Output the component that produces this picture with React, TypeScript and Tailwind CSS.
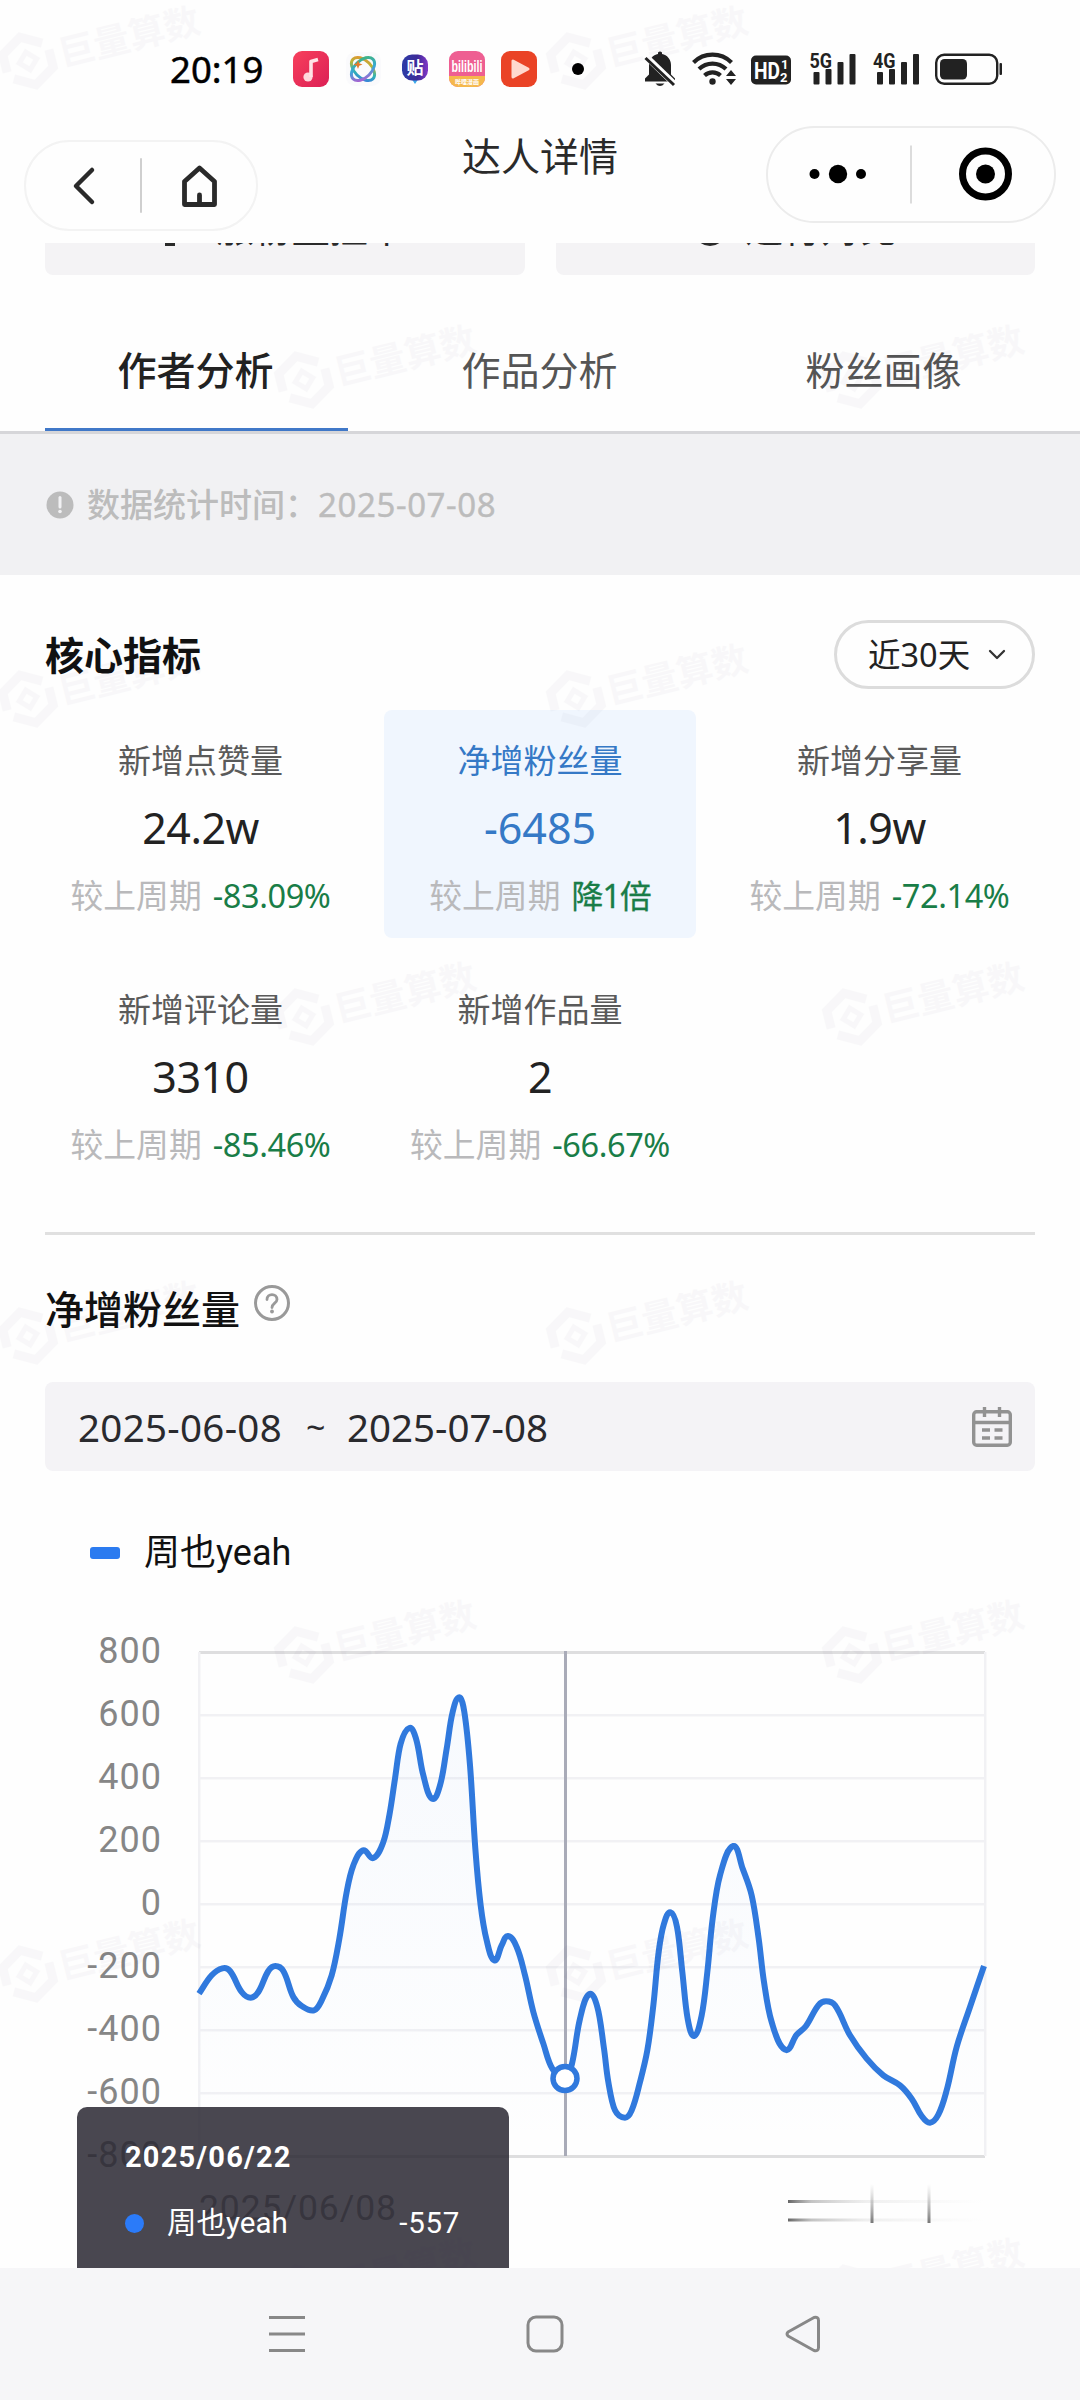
import React from "react";

const metrics = [
    { label: "新增点赞量", value: "24.2w", change: "-83.09%" },
    { label: "净增粉丝量", value: "-6485", change: "降1倍", active: true },
    { label: "新增分享量", value: "1.9w", change: "-72.14%" },
    { label: "新增评论量", value: "3310", change: "-85.46%" },
    { label: "新增作品量", value: "2", change: "-66.67%" },
];

const tabs = ["作者分析", "作品分析", "粉丝画像"];

// Curve samples, in thirds of a pixel from the top left corner of the plot
const curve: [number, number][] = [
    [0, 1025], [38, 970], [70, 949], [93, 957], [128, 1020], [155, 1037], [178, 1020], [208, 957], [229, 942],
    [253, 957], [283, 1035], [308, 1062], [345, 1075], [368, 1045], [398, 970], [421, 860], [443, 720], [463, 640],
    [492, 595], [523, 618], [553, 570], [571, 490], [588, 380], [605, 275], [631, 228], [651, 260], [673, 370],
    [699, 440], [723, 400], [743, 290], [761, 180], [781, 136], [796, 180], [813, 340], [829, 590], [845, 760],
    [863, 865], [886, 925], [908, 880], [927, 852], [953, 885], [978, 970], [1003, 1080], [1033, 1175],
    [1060, 1250], [1099, 1280], [1119, 1235], [1143, 1100], [1170, 1027], [1195, 1065], [1215, 1190],
    [1228, 1290], [1248, 1375], [1278, 1397], [1298, 1375], [1323, 1290], [1345, 1195], [1363, 1060],
    [1379, 900], [1395, 815], [1415, 781], [1434, 825], [1450, 960], [1466, 1100], [1485, 1152], [1508, 1090],
    [1525, 960], [1541, 800], [1563, 670], [1603, 582], [1631, 650], [1658, 730], [1679, 860], [1695, 990],
    [1718, 1110], [1758, 1193], [1793, 1148], [1821, 1122], [1858, 1060], [1881, 1048], [1908, 1060],
    [1953, 1150], [2003, 1220], [2053, 1270], [2103, 1300], [2138, 1340], [2168, 1392], [2193, 1412],
    [2218, 1388], [2243, 1315], [2273, 1185], [2313, 1065], [2355, 942],
];

// Smooth path: tangents follow the neighbours, handles never reach past half of a segment
const smoothPath = (points: [number, number][]) => {
    const p = points.map(([x, y]) => [x / 3, y / 3]);
    const tangents = p.map((_, i) => {
        const a = p[Math.max(i - 1, 0)];
        const b = p[Math.min(i + 1, p.length - 1)];
        const len = Math.hypot(b[0] - a[0], b[1] - a[1]);
        return [(b[0] - a[0]) / len, (b[1] - a[1]) / len];
    });
    let d = `M${p[0][0]} ${p[0][1]}`;
    for (let i = 0; i < p.length - 1; i++) {
        const [x1, y1] = p[i];
        const [x2, y2] = p[i + 1];
        const [t1, t2] = [tangents[i], tangents[i + 1]];
        const h = Math.hypot(x2 - x1, y2 - y1) / 2.8;
        const h1 = Math.min(h, ((x2 - x1) * 0.5) / t1[0]);
        const h2 = Math.min(h, ((x2 - x1) * 0.5) / t2[0]);
        d += `C${x1 + t1[0] * h1} ${y1 + t1[1] * h1} ${x2 - t2[0] * h2} ${y2 - t2[1] * h2} ${x2} ${y2}`;
    }
    return d;
};

const linePath = smoothPath(curve);

function AppIcons() {
    return (
        <svg width="300" height="42" viewBox="0 0 300 42" className="absolute top-0 left-[291px]">
            <defs>
                <linearGradient id="petal" x1="0" y1="0" x2="1" y2="1">
                    <stop offset="0" stopColor="#f08a2c" />
                    <stop offset="0.35" stopColor="#b7b53a" />
                    <stop offset="0.65" stopColor="#2fb3b5" />
                    <stop offset="1" stopColor="#3d6fe8" />
                </linearGradient>
                <linearGradient id="petal2" x1="1" y1="0" x2="0" y2="1">
                    <stop offset="0" stopColor="#3fb56c" />
                    <stop offset="0.5" stopColor="#38a9d8" />
                    <stop offset="1" stopColor="#c64fd0" />
                </linearGradient>
                <linearGradient id="music" x1="0" y1="0" x2="1" y2="1">
                    <stop offset="0" stopColor="#f7405c" />
                    <stop offset="1" stopColor="#dc1f55" />
                </linearGradient>
                <linearGradient id="tieba" x1="0" y1="0" x2="1" y2="0">
                    <stop offset="0" stopColor="#2c3ca6" />
                    <stop offset="0.6" stopColor="#3d2a98" />
                    <stop offset="1" stopColor="#8338c8" />
                </linearGradient>
            </defs>
            {/* Music */}
            <rect x="2" y="3" width="36" height="36" rx="9" fill="url(#music)" />
            <circle cx="17" cy="29" r="4.6" fill="#ffd7dc" />
            <path d="M20 29V13.500l7-2" fill="none" stroke="#ffe3e6" strokeWidth="3.600" strokeLinejoin="round" />
            {/* Petal */}
            <rect x="55" y="4" width="35" height="34" rx="9" fill="#fafafc" />
            <g fill="none" strokeWidth="3">
                <ellipse cx="72" cy="21" rx="14" ry="8.500" transform="rotate(45 72 21)" stroke="url(#petal)" />
                <ellipse cx="72" cy="21" rx="14" ry="8.500" transform="rotate(-45 72 21)" stroke="url(#petal2)" />
            </g>
            <path d="M67 12l1.200 3.300 3.300 1.200-3.300 1.200L67 21l-1.200-3.300-3.300-1.200 3.300-1.200z" fill="#e57a2a" />
            {/* Tieba */}
            <path d="M120 30h8l-4 6z" fill="#3aa8ea" />
            <rect x="111" y="6.500" width="26" height="26" rx="10" fill="url(#tieba)" />
            <text x="124" y="25.500" textAnchor="middle" fontSize="17" fontWeight="700" fill="#fff" className="font-['Noto_Sans_CJK_SC',sans-serif]">贴</text>
            {/* Bilibili comics */}
            <rect x="158" y="3" width="36" height="36" rx="9" fill="#ee5f92" />
            <path d="M158 28h36v2a9 9 0 0 1-9 9h-18a9 9 0 0 1-9-9z" fill="#f5b84c" />
            <text x="176" y="24" textAnchor="middle" fontSize="17" fontWeight="700" fill="#fff" textLength="31" lengthAdjust="spacingAndGlyphs" className="font-['Liberation_Sans',sans-serif]">bilibili</text>
            <text x="176" y="36" textAnchor="middle" fontSize="6" fontWeight="700" fill="#fff" className="font-['Noto_Sans_CJK_SC',sans-serif]">哔哩漫画</text>
            {/* Player */}
            <rect x="210" y="3" width="36" height="36" rx="9" fill="#ea4326" />
            <path d="M222 13v16l15-8z" fill="#ffd9cf" stroke="#ffd9cf" strokeWidth="3" strokeLinejoin="round" />
            <circle cx="287" cy="21" r="6" fill="#000" />
        </svg>
    );
}

function SystemIcons() {
    return (
        <svg width="360" height="42" viewBox="643 50 360 42" fill="#222" className="absolute top-0 left-[643px]">
            {/* Muted bell */}
            <path d="M645 83.500v-3l4-4V67c0-6 4-10 9-11v-1.500q2-2 4 0V56c5 1 9 5 9 11v9.500l4 4v3z" />
            <path d="M655.500 85.500h9q-4.500 5-9 0z" />
            <path d="M646 58.500l29 28" stroke="#fff" strokeWidth="6" />
            <path d="M645.500 60l28.500 27" stroke="#222" strokeWidth="3" />
            {/* Wifi */}
            <g fill="none" stroke="#222" strokeWidth="4.200">
                <path d="M693.500 64.500a27 27 0 0 1 38 0" />
                <path d="M699 71a19.500 19.500 0 0 1 27 0" />
                <path d="M704.500 77.500a12 12 0 0 1 16 0" />
            </g>
            <circle cx="712.500" cy="83.500" r="3.200" />
            <path d="M726 78l5-6 5 6zM726 81l5 6 5-6z" />
            {/* HD */}
            <rect x="751" y="57.500" width="40" height="29" rx="5" />
            <g fill="#fff" fontWeight="700" className="font-['Roboto',sans-serif]">
                <text x="754" y="80.500" fontSize="23" textLength="26" lengthAdjust="spacingAndGlyphs">HD</text>
                <text x="781" y="71" fontSize="13">1</text>
                <text x="780" y="83.500" fontSize="13">2</text>
            </g>
            {/* Mobile signals */}
            {[{ x: 0, name: "5G" }, { x: 63.500, name: "4G" }].map((sim) => (
                <g key={sim.name} transform={`translate(${sim.x} 0)`}>
                    <rect x="813.500" y="74" width="6" height="12.500" rx="1" />
                    <rect x="825.500" y="71" width="6" height="15.500" rx="1" />
                    <rect x="837.500" y="64" width="6" height="22.500" rx="1" />
                    <rect x="849.500" y="56" width="6" height="30.500" rx="1" />
                    <text x="809.500" y="69.500" fontSize="20.500" fontWeight="700" textLength="22.500" lengthAdjust="spacingAndGlyphs" className="font-['Roboto',sans-serif]">{sim.name}</text>
                </g>
            ))}
            {/* Battery */}
            <rect x="936.200" y="56.700" width="61" height="29" rx="8" fill="none" stroke="#222" strokeWidth="2.400" />
            <rect x="940" y="61" width="27" height="20.500" rx="4.500" />
            <rect x="999.500" y="65" width="2.500" height="12" rx="1" />
        </svg>
    );
}

function Header() {
    return (
        <header className="flex h-[243px] flex-none flex-col">
            <div className="relative mt-[48px] flex h-[42px] items-center pl-[170px]">
                <span className="text-[36.500px] leading-[42px] text-black [-webkit-text-stroke:0.500px_black]">20:19</span>
                <AppIcons />
                <SystemIcons />
            </div>
            <div className="grid flex-1 grid-cols-[1fr_auto_1fr] items-start">
                <div className="mt-[50px] ml-[24px] flex h-[91px] w-[234px] items-center rounded-full border-2 border-[#f3f3f3]">
                    <svg width="230" height="87" viewBox="0 0 230 87" fill="none" stroke="#2a2a2a" strokeLinecap="round" strokeLinejoin="round">
                        <path d="M66 28L50 44l16 16" strokeWidth="4.500" />
                        <path d="M115 17v53" stroke="#cfcfcf" strokeWidth="2" />
                        <path d="M158.500 62.500v-23L173.500 26l15 13.500v23z" strokeWidth="4.800" />
                        <path d="M173.500 53v8" strokeWidth="4.800" />
                    </svg>
                </div>
                <h1 className="mt-[45px] text-[39px] leading-[42px] text-[#2a2a2a]">达人详情</h1>
                <div className="mt-[36px] mr-[24px] flex h-[97px] w-[290px] items-center justify-self-end rounded-full border-2 border-[#ececec]">
                    <svg width="286" height="93" viewBox="0 0 286 93" fill="#000">
                        <circle cx="46.500" cy="46" r="5" />
                        <circle cx="70" cy="46" r="9.200" />
                        <circle cx="93" cy="46" r="5" />
                        <path d="M143 17.500v58" stroke="#dcdcdc" strokeWidth="2" />
                        <circle cx="217.500" cy="46" r="23" fill="none" stroke="#000" strokeWidth="7" />
                        <circle cx="217.500" cy="46" r="9.500" />
                    </svg>
                </div>
            </div>
        </header>
    );
}

function ActionButtons() {
    return (
        <div className="-mt-[64px] grid flex-none grid-cols-2 gap-[31px] px-[45px] text-[38px] leading-[96px] text-[#2a2a2a]">
            <div className="flex h-[96px] justify-center gap-[34px] rounded-[8px] bg-[#f4f3f5] pr-[6px]">
                <svg width="24" height="38" viewBox="0 0 24 38" fill="#2a2a2a" className="mt-[30px]">
                    <path d="M1 24L4 14q8-12 16 0l3 10zM7 32h10v5H7z" />
                </svg>
                <span>涨粉监控中</span>
            </div>
            <div className="flex h-[96px] justify-center gap-[18px] rounded-[8px] bg-[#f4f3f5]">
                <svg width="34" height="34" viewBox="0 0 34 34" fill="none" stroke="#2a2a2a" strokeWidth="4" className="mt-[34px]">
                    <circle cx="17" cy="17" r="14" />
                    <path d="M17 3v28" />
                </svg>
                <span>进行对比</span>
            </div>
        </div>
    );
}

function Tabs() {
    return (
        <nav className="mt-[35px] flex h-[124px] flex-none gap-[41px] border-b-3 border-[#d6d6d9] pl-[45px] text-[39px]">
            {tabs.map((tab, i) => (
                <div
                    key={tab}
                    className={
                        i === 0
                            ? "w-[303px] border-b-3 border-[#4078c8] pt-[39px] pr-[2px] text-center leading-[42px] font-medium text-[#222]"
                            : "w-[303px] pt-[39px] pr-[2px] text-center leading-[42px] text-[#555]"
                    }
                >
                    {tab}
                </div>
            ))}
        </nav>
    );
}

function MetricCard({ label, value, change, active }: { label: string; value: string; change: string; active?: boolean }) {
    return (
        <div className={active ? "h-[228px] rounded-[8px] bg-[#f0f6fe] pt-[31px] text-center" : "h-[228px] pt-[31px] text-center"}>
            <div className={active ? "text-[33px] leading-[40px] text-[#3579c6]" : "text-[33px] leading-[40px] text-[#5a5a5a]"}>{label}</div>
            <div className={active ? "mt-[22px] text-[43px] leading-[50px] text-[#3579c6]" : "mt-[22px] text-[43px] leading-[50px] tracking-[-0.500px] text-[#222]"}>{value}</div>
            <div className="mt-[23px] flex items-baseline justify-center gap-[11px] text-[32.800px] leading-[40px]">
                <span className="text-[#b9b9bb]">较上周期</span>
                <span className={active ? "text-[32px] tracking-[-1px] text-[#197d47] [-webkit-text-stroke:0.300px_#197d47]" : "text-[32.500px] tracking-[-0.400px] text-[#197d47]"}>{change}</span>
            </div>
        </div>
    );
}

function TrendChart() {
    const ticks = [800, 600, 400, 200, 0, -200, -400, -600, -800];
    return (
        <div className="relative flex-none">
            <svg width="1080" height="668" viewBox="0 0 1080 668" className="block font-['Roboto',sans-serif]">
                <defs>
                    <linearGradient id="area" x1="0" y1="0" x2="0" y2="1">
                        <stop offset="0" stopColor="#2b7bf0" stopOpacity="0.035" />
                        <stop offset="1" stopColor="#2b7bf0" stopOpacity="0" />
                    </linearGradient>
                    <linearGradient id="fadeX" x1="0" y1="0" x2="1" y2="0">
                        <stop offset="0" stopColor="#666" />
                        <stop offset="0.12" stopColor="#aaa" stopOpacity="0.7" />
                        <stop offset="0.4" stopColor="#ccc" stopOpacity="0.3" />
                        <stop offset="1" stopColor="#ddd" stopOpacity="0" />
                    </linearGradient>
                    <linearGradient id="fadeY" x1="0" y1="0" x2="0" y2="1">
                        <stop offset="0" stopColor="#aaa" stopOpacity="0" />
                        <stop offset="1" stopColor="#777" />
                    </linearGradient>
                </defs>
                <g transform="translate(199 53)">
                    {ticks.map((tick, i) => (
                        <g key={tick}>
                            <rect x="0" y={i * 63 - 1} width="786" height={i % 8 === 0 ? 3 : 2.500} fill={i % 8 === 0 ? "#dededf" : "#f1f1f4"} />
                            <text x="-37" y={i * 63 + 11} textAnchor="end" fontSize="36" letterSpacing="1" fill="#868686">{tick}</text>
                        </g>
                    ))}
                    <rect x="-1" y="0" width="2.500" height="504" fill="#f1f1f4" />
                    <rect x="785" y="0" width="2.500" height="504" fill="#f1f1f4" />
                    <path d={`${linePath}L785 504L0 504Z`} fill="url(#area)" />
                    <rect x="365" y="-1" width="3" height="505" fill="#a9abb8" />
                    <path d={linePath} fill="none" stroke="#3079dd" strokeWidth="6" />
                    <circle cx="366" cy="426.500" r="12" fill="#fff" stroke="#3079dd" strokeWidth="5.500" />
                    <text x="0" y="568" fontSize="35.500" letterSpacing="0.900" fill="#868686">2025/06/08</text>
                    {/* Last label, cut off by the scroll edge */}
                    <rect x="589" y="548" width="196" height="3" fill="url(#fadeX)" />
                    <rect x="589" y="566.500" width="196" height="3" fill="url(#fadeX)" />
                    <rect x="671.500" y="532" width="3" height="39" fill="url(#fadeY)" />
                    <rect x="728.500" y="532" width="3" height="39" fill="url(#fadeY)" />
                </g>
            </svg>
            <div className="absolute top-[508px] left-[77px] h-[180px] w-[432px] rounded-[10px] bg-[#292731]/85 pt-[34px] pr-[49px] pl-[48px] font-['Roboto','Noto_Sans_CJK_SC',sans-serif] text-white">
                <div className="text-[29px] leading-[32px] font-bold tracking-[1.200px]">2025/06/22</div>
                <div className="mt-[32px] flex items-center text-[29.500px] leading-[36px]">
                    <span className="size-[19px] rounded-full bg-[#2b7bf9]" />
                    <span className="ml-[23px]">周也yeah</span>
                    <span className="ml-auto tracking-[0.700px]">-557</span>
                </div>
            </div>
        </div>
    );
}

// Faint brand marks repeated across the whole screen
function Watermarks() {
    const marks: [number, number][] = [];
    for (let row = 0; row < 8; row++) {
        const x = row % 2 === 0 ? 28 : 304;
        const y = 61 + Math.round(row * 318.800);
        marks.push([x, y], [x + 548, y]);
    }
    return (
        <svg width="1080" height="2268" className="pointer-events-none absolute top-0 left-0 opacity-[0.025]">
            {marks.map(([x, y]) => (
                <g key={`${x}-${y}`} transform={`translate(${x} ${y}) rotate(-14)`}>
                    <path d="M-23 6V-12L-2-25l20 11M23-6v18L2 25l-20-11" fill="none" stroke="#302050" strokeWidth="9" />
                    <path d="M0-9l9 9-9 9-9-9z" fill="none" stroke="#302050" strokeWidth="5" />
                    <text x="32" y="14" fontSize="36" fontWeight="700" fill="#302050" className="font-['Noto_Sans_CJK_SC',sans-serif]">巨量算数</text>
                </g>
            ))}
        </svg>
    );
}

export default function App() {
    return (
        <div className="relative flex h-[2400px] w-[1080px] flex-col overflow-hidden bg-[#fefefe] font-['Noto_Sans','Noto_Sans_CJK_SC',sans-serif]">
            <Header />
            <main className="flex h-[2025px] flex-none flex-col overflow-hidden">
                <ActionButtons />
                <Tabs />
                <div className="flex h-[141px] flex-none items-center bg-[#f1f1f3] pt-px pl-[46px] text-[#bcbcbc]">
                    <svg width="28" height="28" viewBox="0 0 28 28">
                        <circle cx="14" cy="14" r="13.500" fill="#bcbcbc" />
                        <path d="M14 6.500v9.500" stroke="#f1f1f3" strokeWidth="3" strokeLinecap="round" />
                        <circle cx="14" cy="20.500" r="1.800" fill="#f1f1f3" />
                    </svg>
                    <span className="ml-[13px] text-[33px] leading-[40px] font-medium">数据统计时间：</span>
                    <span className="text-[33px] leading-[40px] tracking-[0.600px] [-webkit-text-stroke:0.400px_#bcbcbc]">2025-07-08</span>
                </div>

                <section className="mx-[45px] mt-[45px] flex-none">
                    <div className="flex h-[69px] items-center justify-between">
                        <h2 className="text-[39px] leading-[44px] font-bold text-[#111]">核心指标</h2>
                        <div className="flex h-[69px] w-[201px] items-center rounded-full border-3 border-[#dcdcdc] pl-[31px] text-[#222]">
                            <span className="text-[32.500px] leading-[40px]">近30天</span>
                            <svg width="18" height="12" viewBox="0 0 18 12" fill="none" stroke="#333" strokeWidth="2.300" strokeLinecap="round" strokeLinejoin="round" className="ml-[18px]">
                                <path d="M2 2l7 7 7-7" />
                            </svg>
                        </div>
                    </div>
                    <div className="mt-[21px] grid grid-cols-[311px_312px_311px] justify-between gap-y-[21px]">
                        {metrics.map((metric) => (
                            <MetricCard key={metric.label} {...metric} />
                        ))}
                    </div>
                    <div className="mt-[45px] h-[3px] bg-[#e0e0e0]" />
                </section>

                <section className="mt-[52px] flex-none">
                    <div className="flex h-[44px] items-center px-[45px]">
                        <h2 className="text-[39px] leading-[44px] font-medium text-[#111]">净增粉丝量</h2>
                        <svg width="36" height="36" viewBox="0 0 36 36" fill="none" stroke="#999" className="-mt-[12px] ml-[14px]">
                            <circle cx="18" cy="18" r="16.500" strokeWidth="3" />
                            <path d="M13 14.500c0-6.500 10-6.500 10 0 0 3.500-5 3.800-5 8" strokeWidth="2.800" strokeLinecap="round" />
                            <circle cx="18" cy="26.500" r="1.900" fill="#999" stroke="none" />
                        </svg>
                    </div>
                    <div className="mx-[45px] mt-[51px] flex h-[89px] items-center rounded-[8px] bg-[#f4f3f6] pr-[23px] pl-[33px] text-[38.500px] leading-[48px] text-[#2a2a2e]">
                        <span className="w-[206px] tracking-[0.300px] whitespace-nowrap">2025-06-08</span>
                        <span className="ml-[22px] w-[41px] text-[34px]">~</span>
                        <span className="whitespace-nowrap">2025-07-08</span>
                        <svg width="40" height="40" viewBox="0 0 40 40" fill="none" stroke="#929292" strokeWidth="3.400" className="ml-auto">
                            <rect x="1.700" y="4.700" width="36.600" height="33.600" rx="3" />
                            <path d="M2 15.500h36M12.500 0v10M27.500 0v10M10 23h8M22.500 23h8M10 31h8M22.500 31h8" />
                        </svg>
                    </div>
                    <div className="mt-[62px] flex h-[40px] items-center pl-[90px] font-['Roboto','Noto_Sans_CJK_SC',sans-serif]">
                        <span className="h-[12px] w-[30px] rounded-[3px] bg-[#2b7bf0]" />
                        <span className="ml-[24px] text-[36px] leading-[40px] text-[#111]">周也yeah</span>
                    </div>
                    <div className="mt-[26px]">
                        <TrendChart />
                    </div>
                </section>
            </main>
            <footer className="flex-1 bg-[#f6f6f8]">
                <svg width="1080" height="132" viewBox="0 0 1080 132" fill="none" stroke="#888" strokeWidth="3" strokeLinejoin="round">
                    <path d="M269 49.500h36M269 66h36M269 82.500h36" />
                    <rect x="528" y="49" width="34" height="34" rx="8" />
                    <path d="M788 64q-2 2 0 4l26 14.500q4.500 1 4.500-3v-27q0-4-4.500-3z" />
                </svg>
            </footer>
            <Watermarks />
        </div>
    );
}
